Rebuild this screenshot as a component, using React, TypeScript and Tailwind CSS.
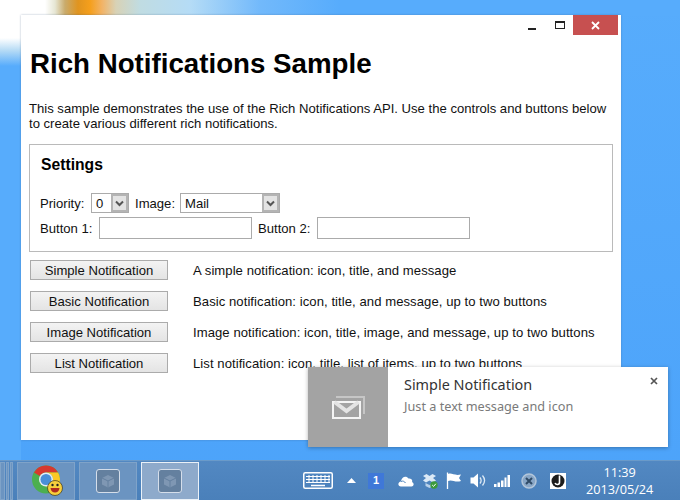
import React from 'react';

const rows = [
  { label: 'Simple Notification', text: 'A simple notification: icon, title, and message' },
  { label: 'Basic Notification', text: 'Basic notification: icon, title, and message, up to two buttons' },
  { label: 'Image Notification', text: 'Image notification: icon, title, image, and message, up to two buttons' },
  { label: 'List Notification', text: 'List notification: icon, title, list of items, up to two buttons' },
];

const Chevron = () => (
  <span className="flex h-full w-[17px] shrink-0 items-center justify-center border-2 border-[#b4b4b4] bg-[#e3e3e3]">
    <svg width="9" height="7" viewBox="0 0 9 7">
      <path d="M1 1.5 L4.5 5 L8 1.5" fill="none" stroke="#555" strokeWidth="2" />
    </svg>
  </span>
);

const AppThumb = ({ active }: { active?: boolean }) => (
  <div className={`ml-[4px] flex h-[38px] w-[58px] items-center justify-center border ${active ? 'border-[#eaf1f8] bg-[#8eaacb]' : 'border-[#7fa3c9] bg-[#6b94c1]'}`}>
    <div className="flex h-[24px] w-[24px] items-center justify-center rounded-[3px] border border-[#d5deea] bg-[#64809f]">
      <svg width="14" height="14" viewBox="0 0 14 14">
        <path d="M7 1 L13 4 V10.5 L7 13.5 L1 10.5 V4 Z" fill="#7f97b3" />
        <path d="M1 4 L7 7 L13 4 M7 7 V13.5" fill="none" stroke="#64809f" strokeWidth="1" />
      </svg>
    </div>
  </div>
);

const ChromeLogo = () => (
  <svg className="ml-[2px]" width="31" height="31" viewBox="0 0 31 31">
    <circle cx="14" cy="14.5" r="14" fill="#4caf50" />
    <path d="M14 .5 A14 14 0 0 1 26.1 7.5 H14 A7 7 0 0 0 7.9 11 L2 7.5 A14 14 0 0 1 14 .5 Z" fill="#d8382e" />
    <path d="M26.1 7.5 A14 14 0 0 1 20 27.1 L14 21.5 A7 7 0 0 0 14 7.5 Z" fill="#fbc926" />
    <circle cx="14" cy="14.5" r="7" fill="#e6edf5" />
    <circle cx="14" cy="14.5" r="5.5" fill="#4a8fd8" />
    <circle cx="23" cy="23" r="7.5" fill="#f7cf3d" stroke="#3a3320" strokeWidth="0.7" />
    <circle cx="20.5" cy="20" r="1.2" fill="#222" />
    <circle cx="25.5" cy="20" r="1.2" fill="#222" />
    <path d="M18.5 23 H27.5 C27 29 19 29 18.5 23 Z" fill="#b02a20" />
  </svg>
);

export default function App() {
  return (
    <div className="relative flex h-[500px] w-[680px] flex-col overflow-hidden bg-gradient-to-b from-[#57acfc] to-[#4ca3fa] font-['Liberation_Sans',Arial,sans-serif]">
      {/* wallpaper */}
      <div className="relative flex-1 bg-[linear-gradient(90deg,#ffffff_0px,#ffffff_45px,#e6e6d4_55px,#c9ab6c_65px,#e0941f_78px,#f59f1c_90px,#f2b366_102px,#d8d2b6_116px,#c0dce2_140px,#b5dcf6_190px,#72b9fb_260px,#57acfc_340px),linear-gradient(180deg,#ffffff_0px,#ffffff_38px,#b8dcf5_50px,#57acfc_66px)] bg-[length:100%_15px,21px_100%] bg-no-repeat">
        {/* app window */}
        <div className="absolute left-[21px] top-[15px] flex h-[425px] w-[600px] flex-col bg-white text-[13.1px] leading-[15px] text-[#111] shadow-[0_0_2px_rgba(60,90,130,0.4)]">
          <div className="flex h-[20px] justify-end pr-[3px]">
            <div className="flex h-[20px] w-[30px] items-end justify-center pb-[5px]">
              <div className="h-[2px] w-[8px] bg-[#222]" />
            </div>
            <div className="flex h-[20px] w-[26px] items-start justify-center pt-[6px]">
              <div className="h-[8px] w-[10px] border border-t-2 border-[#222]" />
            </div>
            <div className="flex h-[20px] w-[45px] items-center justify-center bg-[#c75050]">
              <svg width="9" height="9" viewBox="0 0 9 9">
                <path d="M1 1 L8 8 M8 1 L1 8" stroke="#fff" strokeWidth="1.8" />
              </svg>
            </div>
          </div>

          <div className="px-[8px]">
            <h1 className="mt-[13px] pl-[1px] text-[27.7px] font-bold leading-[32px] text-black">Rich Notifications Sample</h1>
            <p className="mt-[21px] whitespace-nowrap text-[#111]">
              This sample demonstrates the use of the Rich Notifications API. Use the controls and buttons below
              <br />
              to create various different rich notifications.
            </p>

            <div className="mt-[13px] h-[108px] w-[584px] border border-[#bababa] px-[10px]">
              <h2 className="mt-[11px] ml-[1px] text-[15.7px] font-bold leading-[17px] text-black">Settings</h2>
              <div className="mt-[20px] flex h-[20px] items-center whitespace-nowrap">
                <span className="w-[44px]">Priority:</span>
                <div className="ml-[7px] flex h-[20px] w-[38px] items-center border border-[#ababab] pl-[4px]">
                  <span className="flex-1">0</span>
                  <Chevron />
                </div>
                <span className="ml-[6px] w-[38px]">Image:</span>
                <div className="ml-[7px] flex h-[20px] w-[100px] items-center border border-[#ababab] pl-[4px]">
                  <span className="flex-1">Mail</span>
                  <Chevron />
                </div>
              </div>
              <div className="mt-[4px] flex h-[22px] items-center whitespace-nowrap">
                <span className="w-[53px]">Button 1:</span>
                <div className="ml-[6px] h-[22px] w-[153px] border border-[#ababab]" />
                <span className="ml-[6px] w-[53px]">Button 2:</span>
                <div className="ml-[6px] h-[22px] w-[153px] border border-[#ababab]" />
              </div>
            </div>

            <div className="mt-[8px] flex flex-col gap-[11px]">
              {rows.map((r) => (
                <div key={r.label} className="flex h-[20px] items-center">
                  <div className="ml-[1px] flex h-[20px] w-[138px] items-center justify-center border border-[#ababab] bg-gradient-to-b from-[#f3f3f3] to-[#e4e4e4] text-[#111]">
                    {r.label}
                  </div>
                  <span className="ml-[25px] whitespace-nowrap tracking-[0.06px]">{r.text}</span>
                </div>
              ))}
            </div>
          </div>
        </div>

        {/* notification toast */}
        <div className="absolute left-[308px] top-[367px] flex h-[80px] w-[360px] bg-white shadow-[0_1px_4px_rgba(0,0,0,0.3)]">
          <div className="flex h-[80px] w-[80px] shrink-0 items-center justify-center bg-[#a3a3a3]">
            <svg width="33" height="23" viewBox="0 0 33 23">
              <path d="M4 1 H32 V18" fill="none" stroke="#c6c6c6" strokeWidth="2" />
              <path d="M1 6 H28 V22 H1 Z" fill="none" stroke="#f4f4f4" strokeWidth="2" />
              <path d="M2.5 6 L14.5 15 L26.5 6" fill="none" stroke="#e4e4e4" strokeWidth="4" />
            </svg>
          </div>
          <div className="flex-1 pl-[16px] font-['Noto_Sans',sans-serif]">
            <div className="mt-[8px] text-[14.4px] leading-[20px] text-[#333]">Simple Notification</div>
            <div className="mt-[2px] text-[12.7px] leading-[18px] text-[#7a7a7a]">Just a text message and icon</div>
          </div>
          <svg className="mr-[10px] mt-[10px]" width="8" height="8" viewBox="0 0 8 8">
            <path d="M1 1 L7 7 M7 1 L1 7" stroke="#555" strokeWidth="1.7" />
          </svg>
        </div>
      </div>

      {/* taskbar */}
      <div className="flex h-[40px] items-center border-t border-[#6a9ac9] bg-gradient-to-b from-[#5288c2] to-[#4a80ba]">
        <div className="flex h-[38px] gap-[1px]">
          <div className="w-[5px] border border-[#7fa3c9] bg-[#6b94c1]" />
          <div className="w-[3px] border border-[#7fa3c9] bg-[#6b94c1]" />
          <div className="w-[3px] border border-[#7fa3c9] bg-[#6b94c1]" />
        </div>
        <div className="ml-[4px] flex h-[38px] w-[58px] items-center justify-center border border-[#7fa3c9] bg-[#6b94c1]">
          <ChromeLogo />
        </div>
        <AppThumb />
        <AppThumb active />

        <svg className="ml-[104px]" width="30" height="17" viewBox="0 0 30 17">
          <rect x="0.75" y="0.75" width="28.5" height="15.5" rx="1.5" fill="none" stroke="#fff" strokeWidth="1.5" />
          <path d="M3 4.5 H27 M3 7.5 H27 M3 10.5 H27 M6 3 V11 M10 3 V11 M14 3 V11 M18 3 V11 M22 3 V11 M26 3 V11" stroke="#fff" strokeWidth="1" fill="none" />
          <path d="M8 13.5 H22" stroke="#fff" strokeWidth="1.5" />
        </svg>
        <svg className="ml-[14px]" width="9" height="5" viewBox="0 0 9 5">
          <path d="M4.5 0 L9 5 H0 Z" fill="#fff" />
        </svg>
        <div className="ml-[12px] flex h-[16px] w-[16px] items-center justify-center bg-[#3f78d8] text-[11px] font-bold text-white">1</div>
        <svg className="ml-[14px]" width="16" height="12" viewBox="0 0 16 12">
          <path d="M3 11.5 C-0.5 11.5 -0.5 7 3 6.5 C3.5 2 8 0 10.5 3.5 C13 3 15 5 14 7 C16.5 8 16 11.5 13.5 11.5 Z" fill="#fff" />
          <path d="M3 6.5 C5 5.5 6.5 6.5 7.5 8" stroke="#4f85bf" fill="none" />
        </svg>
        <svg className="ml-[8px]" width="16" height="16" viewBox="0 0 16 16">
          <path d="M1 3 L4.5 1 L7.5 3 L10.5 1 L14 3 L11 5 L14 7.5 L11 9.5 L7.5 7.5 L4 9.5 L1 7.5 L4 5 Z" fill="#dbe9f6" />
          <path d="M3.5 10 L7.5 12 L11 10 V13 L7.5 15 L3.5 13 Z" fill="#b8d1ea" />
          <circle cx="12" cy="12" r="3.7" fill="#3b9a3b" />
          <path d="M10.2 12 L11.6 13.4 L13.8 10.8" stroke="#fff" fill="none" />
        </svg>
        <svg className="ml-[8px]" width="16" height="17" viewBox="0 0 16 17">
          <path d="M1.5 0.5 V17" stroke="#fff" strokeWidth="1.3" />
          <path d="M2 2 C6 0.5 8 4 15 2.5 L13 6 L15 9 C9 11 6 7 2 9 Z" fill="#fff" />
        </svg>
        <svg className="ml-[8px]" width="16" height="15" viewBox="0 0 16 15">
          <path d="M0.5 4.5 H3.5 L8 0.5 V14.5 L3.5 10.5 H0.5 Z" fill="#fff" />
          <path d="M10 4.5 C11.5 6.5 11.5 8.5 10 10.5 M12.5 2.5 C15 5.5 15 9.5 12.5 12.5" stroke="#dce9f5" strokeWidth="1.3" fill="none" />
        </svg>
        <svg className="ml-[8px]" width="16" height="12" viewBox="0 0 16 12">
          <path d="M0 9 H2.5 V12 H0 Z M3.5 7.5 H6 V12 H3.5 Z M7 5.5 H9.5 V12 H7 Z M10.5 2.5 H12.5 V12 H10.5 Z M13.5 0 H16 V12 H13.5 Z" fill="#fff" />
        </svg>
        <svg className="ml-[11px]" width="16" height="16" viewBox="0 0 16 16">
          <circle cx="8" cy="8" r="7" fill="#88a6c6" stroke="#b3c6da" strokeWidth="1.5" />
          <path d="M5 5 L11 11 M11 5 L5 11" stroke="#2f4a66" strokeWidth="2" />
        </svg>
        <div className="ml-[13px] flex h-[16px] w-[16px] items-center justify-center bg-white">
          <svg width="14" height="14" viewBox="0 0 14 14">
            <circle cx="7" cy="7" r="6.5" fill="#1c1c1c" />
            <path d="M8.5 1.5 V8.5 C8.5 11 5 11 4 9" stroke="#fff" strokeWidth="1.6" fill="none" />
          </svg>
        </div>
        <div className="ml-[20px] whitespace-nowrap text-center font-['Open_Sans',sans-serif] text-[12.7px] leading-[17px] text-white">
          11:39
          <br />
          2013/05/24
        </div>
      </div>
    </div>
  );
}
